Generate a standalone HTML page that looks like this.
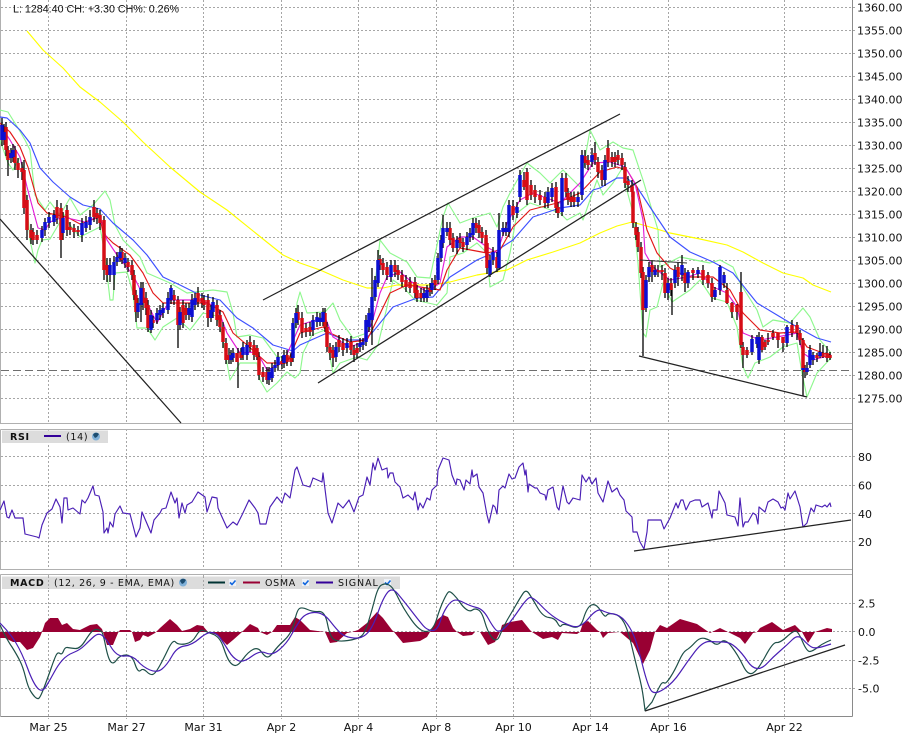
<!DOCTYPE html>
<html><head><meta charset="utf-8"><title>Chart</title>
<style>
html,body{margin:0;padding:0;background:#fff;width:912px;height:741px;overflow:hidden}
svg{display:block}
text{font-family:"DejaVu Sans",sans-serif;font-size:11px;fill:#111}
.g{stroke:#a6a6a6;stroke-width:1;stroke-dasharray:2 2;fill:none;shape-rendering:crispEdges}
.b{stroke:#b0b0b0;stroke-width:1;fill:none;shape-rendering:crispEdges}
.a{stroke:#8a8a8a;stroke-width:1;fill:none;shape-rendering:crispEdges}
.l{fill:none;stroke-width:1.15;stroke-linejoin:round}
.t{fill:none;stroke:#222;stroke-width:1.25}
.lg{font-size:9.5px;letter-spacing:.68px}
</style></head><body>
<svg width="912" height="741" viewBox="0 0 912 741" xmlns="http://www.w3.org/2000/svg">
<rect width="912" height="741" fill="#fff"/>
<!-- vertical grids -->
<path class="g" d="M48.5 0V423M126.5 0V423M203.5 0V423M281.5 0V423M358.5 0V423M436.5 0V423M513.5 0V423M590.5 0V423M668.5 0V423M784.5 0V423"/>
<path class="g" d="M48.5 429V569M126.5 429V569M203.5 429V569M281.5 429V569M358.5 429V569M436.5 429V569M513.5 429V569M590.5 429V569M668.5 429V569M784.5 429V569"/>
<path class="g" d="M48.5 574V719M126.5 574V719M203.5 574V719M281.5 574V719M358.5 574V719M436.5 574V719M513.5 574V719M590.5 574V719M668.5 574V719M784.5 574V719"/>
<!-- horizontal grids -->
<path class="g" d="M1 7.5H856M1 30.5H856M1 53.5H856M1 76.5H856M1 99.5H856M1 122.5H856M1 145.5H856M1 168.5H856M1 191.5H856M1 214.5H856M1 237.5H856M1 260.5H856M1 283.5H856M1 306.5H856M1 329.5H856M1 352.5H856M1 375.5H856M1 398.5H856"/>
<path class="g" d="M1 456.5H856M1 485.5H856M1 513.5H856M1 541.5H856"/>
<path class="g" d="M1 603.5H856M1 631.5H856M1 660.5H856M1 688.5H856"/>
<path d="M1 370.5H852" stroke="#6e6e6e" stroke-width="1" stroke-dasharray="8 4" fill="none" shape-rendering="crispEdges"/>
<!-- frames -->
<path class="b" d="M0.5 0V423.5H852M0.5 429.5V569.5H852M0.5 429.5H852M0.5 574.5V716.5M0.5 574.5H852"/>
<path class="a" d="M0.5 716.5H852.5M852.5 0V716.5"/>

<!-- Bollinger -->
<polyline class="l" stroke="#8ff88f" points="0,110 8,112 18,128 25,140 30,150 35,195 45,210 50,202 60,215 70,198 80,215 93,205 105,191 110,200 115,225 123,240 140,257 147,273 170,283 187,293 213,290 227,292 233,313 237,337 250,335 263,338 277,357 293,357 297,303 300,292 307,313 325,312 333,303 340,320 353,338 367,333 373,303 380,240 390,253 407,262 417,277 430,278 443,217 448,203 460,223 473,218 490,213 497,227 503,207 510,193 527,163 540,173 550,183 563,170 580,187 590,130 600,150 613,142 623,148 633,150 643,180 658,230 660,267 680,257 710,263 720,260 733,267 740,283 757,310 763,327 773,320 790,323 803,308 810,317 820,340 831,353"/>
<polyline class="l" stroke="#8ff88f" points="0,140 8,163 13,170 20,157 24,170 30,240 35,263 38,250 42,240 50,239 60,222 63,213 70,225 80,237 100,227 105,255 110,300 113,300 115,273 127,272 133,293 137,328 147,328 155,340 163,327 177,318 190,330 203,313 217,316 223,340 230,380 240,363 257,363 260,380 267,392 277,383 287,372 295,378 300,373 303,353 312,335 325,330 333,373 340,363 357,357 367,360 378,345 387,307 393,280 403,287 415,300 437,305 447,293 450,257 463,253 477,243 487,253 490,287 503,280 510,253 517,213 530,203 560,213 567,220 580,213 583,220 597,180 603,195 613,183 623,167 625,183 633,213 638,263 643,333 646,337 650,310 657,307 663,283 672,302 690,290 700,280 712,298 727,302 737,327 743,367 748,378 755,363 770,357 783,347 797,343 802,373 807,397 817,373 831,358"/>
<!-- yellow -->
<polyline class="l" stroke="#ffff00" stroke-width="1.4" points="27,31 43,50 63,68 80,87 100,102 123,122 143,142 170,167 200,192 227,210 263,239 283,255 300,263 320,270 343,280 367,288 383,288 397,285 433,285 450,282 477,275 507,270 527,260 553,252 580,243 600,233 617,226 632,222 650,227 670,233 700,239 727,245 743,252 763,263 783,273 803,278 813,285 831,292"/>
<!-- blue MA -->
<polyline class="l" stroke="#3d50ff" points="0,117 7,118 20,130 30,143 40,168 53,182 70,197 83,205 100,209 113,223 133,240 147,255 163,277 180,285 200,295 220,300 237,318 253,328 273,345 293,351 300,345 327,333 345,340 363,340 372,333 393,307 417,298 433,297 450,277 477,260 493,253 513,240 533,217 560,208 580,205 593,190 600,188 617,178 627,178 637,187 650,207 670,237 690,252 713,262 733,273 757,303 777,315 797,327 817,338 831,342"/>
<!-- red MA -->
<polyline class="l" stroke="#e21818" points="0,123 10,132 20,147 28,167 38,203 47,213 67,217 80,224 100,217 103,233 113,243 130,255 143,273 153,293 163,303 187,303 207,303 223,312 233,333 247,345 267,363 287,363 300,333 323,327 330,333 350,342 367,340 377,320 390,293 407,285 440,290 447,270 460,248 487,253 500,250 513,227 530,210 557,203 580,193 600,172 617,167 627,170 637,187 647,230 657,253 670,268 687,277 713,277 730,290 743,313 760,330 780,333 797,332 807,347 823,353 831,355"/>
<!-- magenta -->
<polyline class="l" stroke="#e21ed8" points="0,125 10,140 20,157 27,187 38,228 45,230 50,222 63,217 85,222 100,216 107,240 117,255 133,275 147,303 157,323 170,300 200,300 217,307 227,333 240,353 257,352 267,370 283,363 300,325 325,317 333,337 350,347 363,342 372,323 380,293 387,277 400,272 413,283 427,292 440,283 447,247 460,237 473,237 487,247 497,253 507,223 520,200 533,193 560,203 580,183 593,163 610,162 625,167 635,183 643,220 645,253 653,267 670,280 687,277 700,273 713,287 727,293 737,307 743,333 760,340 777,337 797,333 803,353 813,360 831,355"/>

<!-- wicks -->
<path stroke="#000" stroke-width="1.3" fill="none" d="M2 118V146M4 124V145M6 122V156M8 146V176M11 148V163M13 144V162M15 146V170M18 158V178M22 162V180M24 160V214M27 195V240M31 224V244M33 228V245M37 230V244M42 226V242M45 218V236M49 212V228M54 210V226M57 200V224M61 203V258M63 212V240M67 205V236M70 222V235M74 224V238M78 226V236M82 218V242M86 216V232M90 210V230M94 200V222M97 208V224M100 210V230M104 216V280M107 258V282M110 258V282M114 256V290M117 252V266M120 246V262M122 248V264M125 253V268M128 258V272M132 260V280M134 270V300M136 290V322M138 298V318M141 282V322M143 282V310M146 292V315M148 300V332M151 310V333M153 316V328M157 308V324M160 305V320M163 303V318M168 292V314M171 285V304M174 290V305M178 296V348M180 307V330M183 300V328M186 303V320M189 303V320M192 294V322M195 293V310M198 287V307M202 293V308M204 295V310M208 294V327M211 305V322M213 297V318M217 300V326M220 310V332M223 322V348M226 338V364M229 348V364M231 350V364M233 348V362M238 348V388M241 348V360M243 342V360M247 340V360M250 336V352M254 340V360M257 345V360M259 352V380M263 367V382M267 367V384M269 367V385M272 363V382M275 360V372M278 352V370M282 356V369M284 350V368M287 350V366M291 353V366M293 318V362M296 308V328M298 305V325M302 312V338M306 323V337M310 322V336M313 315V336M317 312V327M320 313V326M323 308V326M325 308V332M327 322V352M330 343V360M333 345V367M336 342V362M339 335V352M343 338V356M347 338V353M351 336V355M354 345V362M357 343V358M360 338V352M363 338V350M366 315V346M369 308V332M372 268V345M375 276V301M378 250V287M380 255V270M383 258V275M387 262V280M391 260V282M395 260V277M398 265V280M402 270V287M406 275V292M410 277V293M415 277V298M417 285V302M421 288V302M424 288V302M427 285V302M430 283V296M432 278V294M435 275V290M438 253V284M441 235V262M443 215V248M447 222V236M450 222V245M453 233V252M457 236V254M460 233V248M463 238V252M467 232V250M470 228V242M473 218V240M476 218V233M479 220V238M482 227V243M486 230V258M487 238V274M490 255V277M493 247V265M497 252V272M499 213V270M503 222V236M506 222V236M509 200V237M513 200V220M517 202V218M520 170V202M524 172V190M527 168V205M531 180V200M535 185V203M540 190V205M545 192V208M548 187V208M552 183V202M556 182V213M558 202V218M562 173V216M566 173V197M568 188V205M571 192V207M574 192V207M578 192V207M582 150V200M585 150V168M588 155V170M592 148V167M595 142V165M598 157V178M602 165V186M605 155V186M608 140V167M612 152V167M615 152V167M618 150V165M622 153V170M625 162V188M628 176V192M632 180V197M633 187V228M636 222V240M638 227V252M641 242V278M643 267V356M646 275V312M649 262V282M652 260V282M655 265V277M658 265V277M662 265V280M665 268V298M668 278V300M671 278V296M672 285V315M675 265V288M678 262V286M682 255V281M685 268V292M688 270V288M693 268V280M698 267V278M703 265V285M708 272V288M712 278V302M715 287V300M720 265V295M724 272V288M727 283V304M732 302V318M737 304V320M741 272V348M743 342V368M747 347V358M752 335V355M757 335V348M759 332V364M762 335V352M765 340V350M768 333V345M773 330V340M778 333V348M783 337V352M787 325V347M792 320V337M797 322V340M800 330V345M803 338V396M805 365V378M807 362V375M810 345V368M813 352V365M817 353V362M820 343V358M823 345V358M827 346V362M830 352V360"/>
<!-- red bodies -->
<path stroke="#d60d16" stroke-width="3.5" fill="none" d="M6 127V150M8 150V160M15 150V163M18 163V170M22 168V172M24 170V208M27 200V230M31 230V238M33 232V240M37 235V240M57 207V218M61 208V240M67 210V230M70 227V230M74 228V232M78 230V232M94 207V217M97 213V218M100 215V223M104 220V270M107 265V275M122 252V260M128 262V267M132 265V275M134 275V295M136 295V312M143 288V303M146 298V308M148 305V328M153 320V323M174 295V300M178 300V325M183 305V323M186 308V315M198 293V302M202 298V303M204 300V305M208 300V318M217 305V320M220 315V327M223 327V342M226 343V360M229 355V360M237 353V362M241 352V358M250 342V347M254 345V355M257 348V357M259 357V375M263 372V377M267 372V380M282 361V364M287 355V362M291 358V362M298 312V320M302 318V332M306 328V332M310 327V332M325 313V327M327 327V347M330 347V353M333 350V358M339 340V347M343 343V350M351 342V350M354 350V355M357 348V353M380 259V265M383 263V270M387 267V275M395 265V272M398 270V275M402 275V282M406 280V287M410 282V288M415 282V293M417 290V298M421 293V298M430 288V292M435 280V285M450 228V240M453 238V248M460 238V243M463 242V247M476 223V228M479 225V233M482 232V238M486 235V253M487 243V268M497 257V268M513 206V215M524 180V187M527 172V200M531 185V195M535 190V197M540 195V200M545 197V203M556 187V208M558 207V213M566 178V192M568 193V200M571 197V202M574 197V202M585 156V163M588 160V165M595 153V160M598 162V172M602 170V180M608 148V162M612 157V162M615 157V162M618 155V160M622 158V165M625 167V183M628 181V185M632 185V192M633 192V223M636 227V235M638 232V247M641 247V273M643 272V310M652 265V272M658 270V272M662 270V272M665 273V293M671 283V290M678 267V277M685 273V283M693 270V273M703 270V280M708 275V283M712 283V297M727 290V303M732 303V312M737 305V312M741 292V345M743 347V355M747 350V355M762 337V350M765 342V347M768 340V342M773 333V337M778 333V340M783 337V343M792 325V333M797 325V333M800 333V340M803 340V368M805 368V372M817 355V358M823 353V357M827 353V358M830 355V358"/>
<!-- blue bodies -->
<path stroke="#0c0fd2" stroke-width="3.5" fill="none" d="M2 125V140M4 132V140M11 153V158M13 150V157M42 230V238M45 222V230M49 217V223M54 215V222M63 218V233M82 223V235M86 222V228M90 217V225M110 265V275M114 262V275M117 257V262M120 252V258M125 258V263M138 303V312M141 288V305M151 315V330M157 313V320M160 310V315M163 308V313M168 298V310M171 288V300M180 312V325M189 308V315M192 300V317M195 298V305M211 310V318M213 302V312M231 355V360M233 353V358M243 347V355M247 345V355M269 372V380M272 368V378M275 365V368M278 357V365M284 355V363M293 323V358M296 313V323M313 320V330M317 317V322M320 318V322M323 312V322M336 347V357M347 343V348M360 343V347M363 342V345M366 320V342M369 313V327M372 297V320M375 280V297M378 260V283M391 265V277M424 293V298M427 290V298M432 283V290M438 258V280M441 240V258M443 228V243M447 228V232M457 240V248M467 237V245M470 233V237M473 223V235M490 260V275M493 252V260M499 230V268M503 228V232M506 228V232M509 205V232M517 207V213M520 175V197M548 192V203M552 188V197M562 178V212M578 197V202M582 155V195M592 155V162M605 160V180M646 280V308M649 267V277M655 270V275M668 283V293M675 270V283M682 265V275M688 272V283M698 270V274M715 290V297M720 267V290M724 275V283M752 339V352M757 337V344M759 337V360M787 327V343M803 368V370M807 368V372M810 350V365M813 355V360M820 352V356"/>

<!-- trend lines -->
<path class="t" d="M0 219L181 423M263 300L620 114M318 383L641 180M639 356L807 397"/>
<path d="M640 260L687 263" fill="none" stroke="#333" stroke-width="1"/>

<!-- RSI -->
<polyline class="l" stroke="#4a1fb5" stroke-width="1.2" points="0,510 4,501 7,517 9,518 12,510 15,518 23,518 25,534 37,537 39,538 42,525 47,513 52,509 56,499 60,507 62,523 64,498 67,498 68,510 73,508 80,514 82,500 85,503 88,498 93,486 95,495 99,496 103,512 104,533 107,528 108,533 110,522 113,527 115,514 120,506 123,513 130,514 136,537 140,528 142,512 151,533 154,520 160,513 162,509 166,508 171,492 175,503 177,498 179,518 182,503 185,513 187,505 192,502 198,492 205,497 207,512 212,497 217,498 218,508 222,517 227,528 233,522 237,525 242,515 249,500 255,508 258,513 260,524 266,524 270,507 277,497 282,503 285,493 290,498 295,470 297,467 303,485 310,487 313,478 322,482 323,473 328,513 332,523 338,503 343,508 349,500 354,512 359,497 363,495 367,477 370,485 373,463 375,470 378,458 382,470 387,468 388,478 390,473 393,473 395,482 400,487 403,498 408,495 413,500 415,492 418,510 420,503 423,508 427,498 430,500 432,490 437,485 438,470 443,458 449,460 452,475 456,485 457,479 460,480 464,490 466,480 470,484 472,470 473,477 477,474 479,487 483,493 487,515 489,523 493,505 495,507 497,514 499,490 503,486 505,488 509,474 512,479 515,478 519,467 523,463 525,475 526,470 528,492 529,484 535,488 537,488 540,493 545,495 546,500 548,490 553,487 557,507 559,510 563,486 567,502 569,504 573,498 580,500 582,475 586,482 589,477 592,484 596,478 598,493 603,502 608,481 612,492 617,488 620,495 624,500 626,511 632,517 633,532 637,532 640,542 644,549 647,532 648,520 653,520 661,520 664,529 670,518 676,503 678,508 681,500 683,500 686,510 690,502 695,500 700,500 702,507 708,503 712,518 713,510 717,510 719,491 722,497 725,503 727,515 735,517 738,526 740,498 743,527 745,522 748,522 753,513 756,515 758,524 759,507 765,512 768,502 773,499 778,502 781,508 783,507 785,510 788,493 790,499 795,491 800,507 803,527 807,523 811,508 814,512 816,505 822,507 825,505 827,507 830,503 831,507"/>
<path class="t" d="M634 551L851 520"/>

<!-- top text -->
<text x="13" y="12.5" style="font-family:'Liberation Sans',sans-serif;font-size:10.7px" fill="#111">L: 1284.40 CH: +3.30 CH%: 0.26%</text>

<!-- RSI legend -->
<rect x="2" y="430.5" width="106" height="12.5" fill="#dcdcdc"/>
<text x="10" y="440" class="lg" style="font-weight:bold">RSI</text>
<rect x="44" y="435" width="17" height="2" fill="#330099"/>
<text x="66" y="440" class="lg">(14)</text>
<circle cx="96" cy="436.5" r="4" fill="#7fb0d8"/><path d="M93 435a3.5 3.5 0 0 1 6-1l-2 3-2 1z" fill="#1d4d70"/>

<!-- MACD legend -->
<rect x="2" y="576.5" width="398" height="12.5" fill="#dcdcdc"/>
<path class="g" d="M48.5 576V589M126.5 576V589M203.5 576V589M281.5 576V589M358.5 576V589"/>
<text x="10" y="586" class="lg" style="font-weight:bold">MACD</text>
<text x="54" y="586" class="lg" style="letter-spacing:.65px">(12, 26, 9 - EMA, EMA)</text>
<circle cx="183" cy="582.5" r="4" fill="#7fb0d8"/><path d="M180 581a3.5 3.5 0 0 1 6-1l-2 3-2 1z" fill="#1d4d70"/>
<rect x="208" y="581.5" width="17" height="2" fill="#003333"/>
<rect x="229" y="579" width="7" height="7" fill="#eef2f8"/><path d="M230 582.5l2 2 3.5-4" stroke="#1166dd" stroke-width="1.6" fill="none"/>
<rect x="243" y="581.5" width="17" height="2" fill="#990033"/>
<text x="265" y="586" class="lg">OSMA</text>
<rect x="302" y="579" width="7" height="7" fill="#eef2f8"/><path d="M303 582.5l2 2 3.5-4" stroke="#1166dd" stroke-width="1.6" fill="none"/>
<rect x="316" y="581.5" width="17" height="2" fill="#330099"/>
<text x="338" y="586" class="lg" style="letter-spacing:.95px">SIGNAL</text>
<rect x="384" y="579" width="7" height="7" fill="#eef2f8"/><path d="M385 582.5l2 2 3.5-4" stroke="#1166dd" stroke-width="1.6" fill="none"/>

<!-- OSMA -->
<polygon fill="#990033" points="0,632 0,638 5,638 13,642 20,642 27,650 33,648 40,637 42,632 45,623 50,618 58,618 62,625 67,623 73,629 80,630 90,625 97,624 102,629 103,632 107,645 113,645 118,633 120,630 130,630 132,632 135,642 140,640 143,635 148,637 155,633 160,628 170,619 177,625 182,631 190,629 197,625 203,626 208,632 217,635 227,645 233,640 242,632 250,624 258,628 260,632 267,635 272,632 277,625 290,625 295,617 300,620 310,630 325,632 330,643 337,642 347,633 352,632 358,630 367,623 377,612 383,618 392,630 394,632 403,643 420,641 427,637 430,632 437,620 443,615 448,617 453,628 457,632 463,636 472,635 475,632 480,632 488,645 495,642 500,632 502,625 510,622 522,620 530,630 532,632 543,639 552,637 558,640 562,633 577,634 580,632 583,623 588,621 597,630 600,632 603,638 608,633 620,632 633,643 643,664 650,650 655,632 660,625 667,628 680,619 697,624 710,633 720,628 728,632 740,638 745,644 753,633 757,632 760,628 772,622 783,630 795,625 800,630 802,632 808,643 815,632 827,628 832,629 832,632"/>
<!-- MACD -->
<path fill="none" stroke="#1f5048" stroke-width="1.2" d="M0,625 Q7,640 12,647 Q17,655 20,661 Q23,667 25.5,677 Q28,687 30.5,691 Q33,695 35,697 Q37,699 38.5,698.5 Q40,698 43.5,689 Q47,680 51,668.5 Q55,657 56.5,654.5 Q58,652 60,653.5 Q62,655 63.5,651 Q65,647 67.5,647.5 Q70,648 75,648.5 Q80,649 85,641 Q90,633 92.5,631 Q95,629 97.5,629.5 Q100,630 101.5,631.5 Q103,633 105.5,645.5 Q108,658 110.5,661.5 Q113,665 116.5,660 Q120,655 126,655 Q132,655 135,664 Q138,673 140.5,670.5 Q143,668 146.5,671.5 Q150,675 152.5,674.5 Q155,674 159,667 Q163,660 168,649.5 Q173,639 175.5,642 Q178,645 185,644 Q192,643 196,636 Q200,629 203.5,630.5 Q207,632 213.5,634.5 Q220,637 223.5,647.5 Q227,658 229.5,661.5 Q232,665 235,665.5 Q238,666 243,659 Q248,652 253,649.5 Q258,647 261.5,652 Q265,657 267.5,657 Q270,657 273.5,652 Q277,647 284.5,640 Q292,633 294.5,621.5 Q297,610 299.5,608.5 Q302,607 307.5,609.5 Q313,612 319,611.5 Q325,611 327.5,624 Q330,637 334,639.5 Q338,642 348,640.5 Q358,639 361.5,636 Q365,633 368.5,621.5 Q372,610 375,598.5 Q378,587 381.5,585 Q385,583 389,585 Q393,587 398,597.5 Q403,608 411.5,620 Q420,632 426.5,631.5 Q433,631 436.5,619.5 Q440,608 443.5,600.5 Q447,593 448.5,592 Q450,591 453.5,594.5 Q457,598 460,602.5 Q463,607 466.5,609.5 Q470,612 472.5,610 Q475,608 478.5,610 Q482,612 485,622.5 Q488,633 492.5,638 Q497,643 500,635 Q503,627 507.5,619.5 Q512,612 516,605 Q520,598 523,593.5 Q526,589 529,593.5 Q532,598 537.5,607.5 Q543,617 549,617.5 Q555,618 557.5,623 Q560,628 561.5,625.5 Q563,623 571.5,626.5 Q580,630 583.5,618.5 Q587,607 591.5,605 Q596,603 600.5,610.5 Q605,618 606.5,615.5 Q608,613 614,614 Q620,615 624,622.5 Q628,630 631.5,645 Q635,660 638.5,673.5 Q642,687 643.5,698.5 L645,710 L652,702 Q660,685 661.5,683.5 Q663,682 664.5,683 Q666,684 670.5,677 Q675,670 679,661 Q683,652 686.5,650 Q690,648 695,642.5 Q700,637 705,638.5 Q710,640 713.5,643 Q717,646 721,642 Q725,638 731.5,646.5 Q738,655 743,665.5 Q748,676 753,673 Q758,670 765.5,656 Q773,642 776.5,642.5 Q780,643 786.5,637 Q793,631 795.5,631 Q798,631 802.5,641.5 Q807,652 810,651.5 Q813,651 817.5,647.5 Q822,644 826.5,642 L831,640"/>
<path fill="none" stroke="#4a1fb5" stroke-width="1.2" d="M0,623 Q10,633 16,643 Q22,653 27.5,668 Q33,683 37.5,688 Q42,693 46,686.5 Q50,680 54,672.5 Q58,665 62.5,660 Q67,655 73.5,652.5 Q80,650 85,645 Q90,640 94,636.5 Q98,633 101.5,635 Q105,637 111,647 Q117,657 124.5,656 Q132,655 137.5,661 Q143,667 150,670 Q157,673 162,669 Q167,665 172,656 Q177,647 184.5,646 Q192,645 199.5,638.5 Q207,632 212,632.5 Q217,633 221,639 Q225,645 229,651.5 Q233,658 238,660.5 Q243,663 251.5,656.5 Q260,650 266,653 Q272,656 279.5,649.5 Q287,643 291,635.5 Q295,628 300,620.5 Q305,613 314,612.5 Q323,612 330,621 Q337,630 341,633.5 Q345,637 353.5,638 Q362,639 367.5,633 Q373,627 378,612.5 Q383,598 387.5,592.5 Q392,587 397.5,593.5 Q403,600 411.5,611 Q420,622 423.5,626 Q427,630 432,630.5 Q437,631 440,622 Q443,613 446.5,607.5 Q450,602 453.5,600.5 Q457,599 463.5,602.5 Q470,606 476.5,607.5 Q483,609 488,618 Q493,627 496,630 Q499,633 504.5,628 Q510,623 518.5,610.5 Q527,598 530,597.5 Q533,597 540.5,605 Q548,613 555.5,618 Q563,623 571.5,626 Q580,629 588.5,618.5 Q597,608 602,610.5 Q607,613 613.5,614 Q620,615 625,621 Q630,627 633.5,635 Q637,643 642.5,665 Q648,687 651.5,691 Q655,695 664,689 Q673,683 680,672.5 Q687,662 695,651.5 Q703,641 710,641.5 Q717,642 723.5,642 Q730,642 736,647.5 Q742,653 747,660.5 Q752,668 757,668.5 Q762,669 767.5,663 Q773,657 780,651 Q787,645 792.5,639.5 Q798,634 803,639.5 Q808,645 811.5,647 Q815,649 823,646.5 L831,644"/>
<path class="t" d="M645 711L845 645"/>

<!-- right axis labels -->
<text x="857" y="11.5">1360.00</text><text x="857" y="34.5">1355.00</text><text x="857" y="57.5">1350.00</text><text x="857" y="80.5">1345.00</text><text x="857" y="103.5">1340.00</text><text x="857" y="126.5">1335.00</text><text x="857" y="149.5">1330.00</text><text x="857" y="172.5">1325.00</text><text x="857" y="195.5">1320.00</text><text x="857" y="218.5">1315.00</text><text x="857" y="241.5">1310.00</text><text x="857" y="264.5">1305.00</text><text x="857" y="287.5">1300.00</text><text x="857" y="310.5">1295.00</text><text x="857" y="333.5">1290.00</text><text x="857" y="356.5">1285.00</text><text x="857" y="379.5">1280.00</text><text x="857" y="402.5">1275.00</text>
<text x="858" y="461">80</text><text x="858" y="489.5">60</text><text x="858" y="518">40</text><text x="858" y="546">20</text>
<text x="858" y="607.5">2.5</text><text x="858" y="636">0.0</text><text x="858" y="664.5">-2.5</text><text x="858" y="692.5">-5.0</text>
<!-- x labels -->
<text x="48.5" y="731" text-anchor="middle">Mar 25</text><text x="126.5" y="731" text-anchor="middle">Mar 27</text><text x="203.5" y="731" text-anchor="middle">Mar 31</text><text x="281.5" y="731" text-anchor="middle">Apr 2</text><text x="358.5" y="731" text-anchor="middle">Apr 4</text><text x="436.5" y="731" text-anchor="middle">Apr 8</text><text x="513.5" y="731" text-anchor="middle">Apr 10</text><text x="590.5" y="731" text-anchor="middle">Apr 14</text><text x="668.5" y="731" text-anchor="middle">Apr 16</text><text x="784.5" y="731" text-anchor="middle">Apr 22</text>
</svg>
</body></html>
